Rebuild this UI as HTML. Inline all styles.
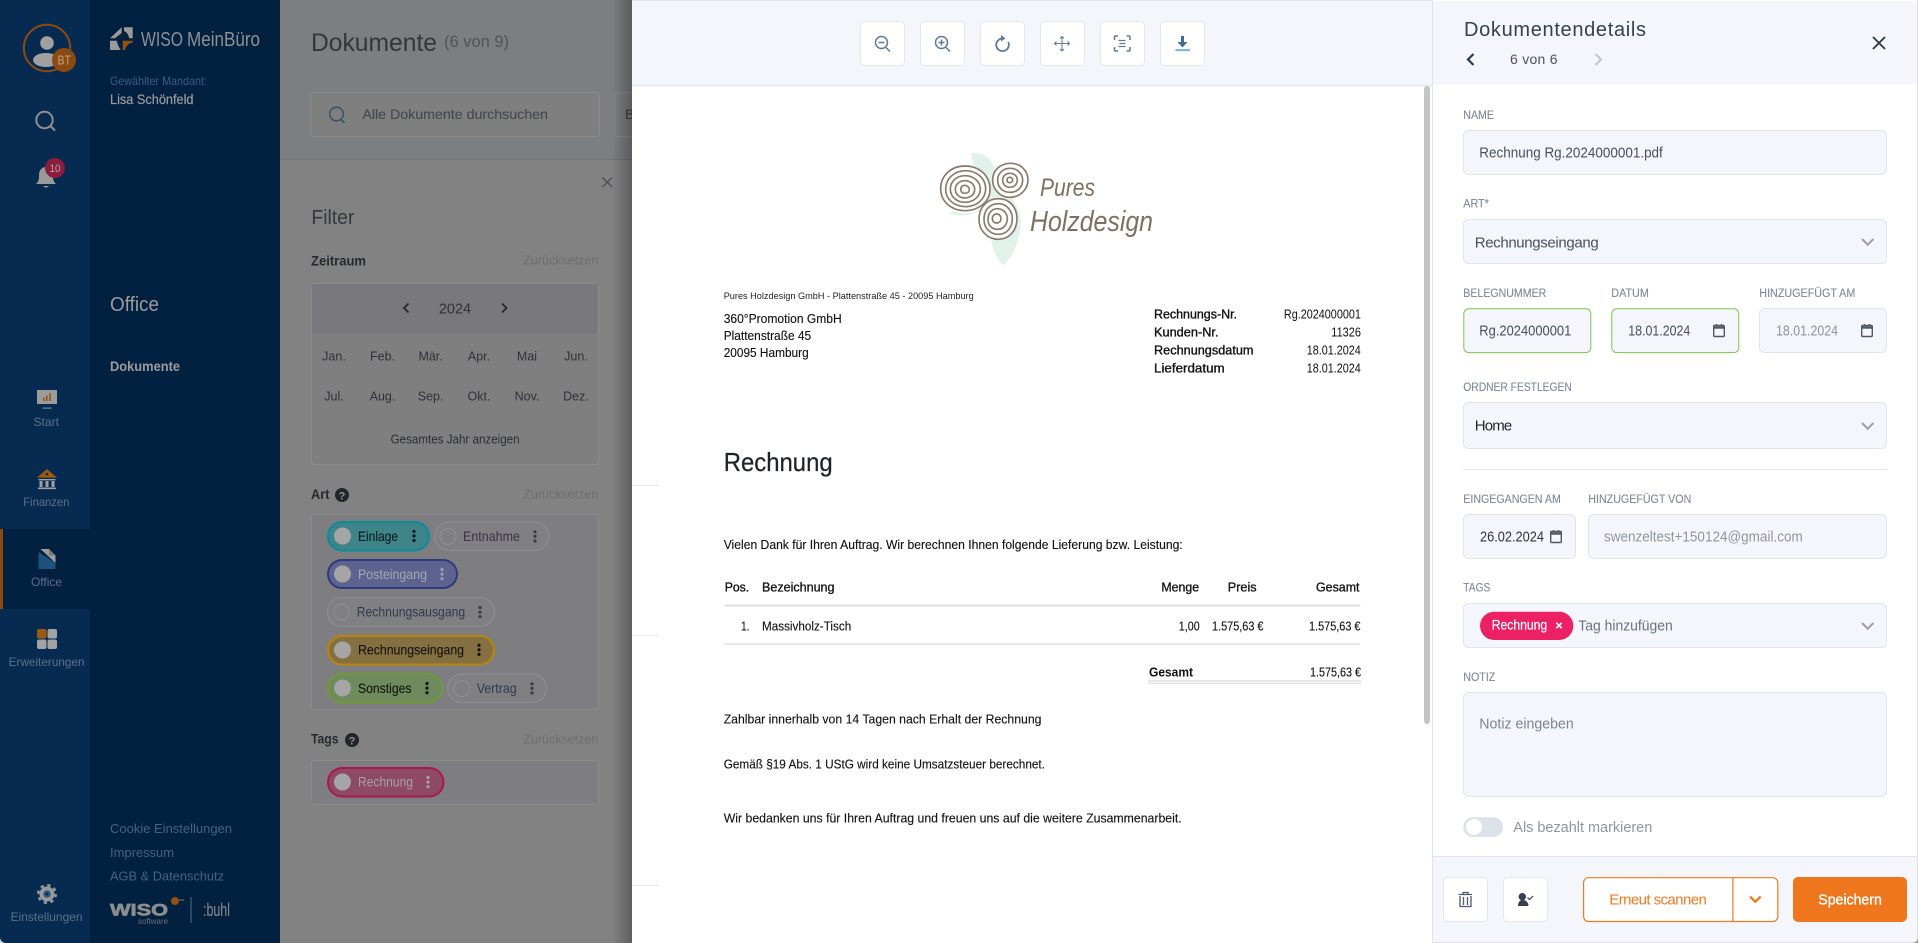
<!DOCTYPE html>
<html lang="de"><head><meta charset="utf-8"><title>Dokumente</title>
<style>
html,body{margin:0;padding:0;width:1918px;height:943px;overflow:hidden;background:#fff}
svg{display:block}
text{font-family:"Liberation Sans",sans-serif;white-space:pre}
.dots{stroke-width:3.2;stroke-linecap:round;stroke-dasharray:0 4.6;fill:none}
.b{font-weight:bold}
.lab{font-size:11.5px;fill:#7f8898;stroke:#7f8898;stroke-width:.12}
.inp{fill:#f4f6fb;stroke:#e0e4ee;stroke-width:1}
.doc{font-size:12.5px;fill:#111;stroke:#111;stroke-width:.12}
.chev{fill:none;stroke:#9aa0ab;stroke-width:2}
.hw{font-family:"Liberation Sans",sans-serif;font-style:italic}
</style></head><body>
<svg xmlns="http://www.w3.org/2000/svg" width="1918" height="943" viewBox="0 0 1918 943">
<defs><linearGradient id="sh" x1="0" x2="1" y1="0" y2="0"><stop offset="0" stop-color="#000" stop-opacity="0"/><stop offset="1" stop-color="#000" stop-opacity=".28"/></linearGradient></defs>

<!-- rail -->
<rect width="90" height="943" fill="#062a50"/>
<rect x="90" width="190" height="943" fill="#022040"/>
<rect y="529" width="90" height="80" fill="#02203f"/>
<rect y="529" width="3" height="80" fill="#8a4a14"/>
<circle cx="47" cy="48" r="23.2" fill="none" stroke="#8a4a14" stroke-width="2"/>
<circle cx="47" cy="43" r="6.8" fill="#a0a0a0"/>
<ellipse cx="46" cy="60" rx="13" ry="7" fill="#a0a0a0"/>
<circle cx="64" cy="60" r="12" fill="#8a4a10"/>
<text x="57.5" y="64.5" font-size="12.5" fill="#c3a488" textLength="13.5" lengthAdjust="spacingAndGlyphs">BT</text>
<circle cx="44.5" cy="120" r="8.2" fill="none" stroke="#8e8f92" stroke-width="2"/>
<path d="M50.5 126l4.5 4.5" stroke="#8e8f92" stroke-width="2"/>
<path d="M36 184c3-3 3-5 3-9 0-5 3-8 7-8s7 3 7 8c0 4 0 6 3 9z" fill="#9a9a9a"/><path d="M43 186h6l-3 2z" fill="#9a9a9a"/>
<circle cx="55" cy="168" r="10" fill="#8a1c3c"/>
<text x="49.5" y="172" font-size="11" fill="#b9a3aa" textLength="11" lengthAdjust="spacingAndGlyphs">10</text>

<rect x="37" y="390" width="20" height="14" fill="#9c9c9c"/><path d="M43 397.5h1.5v3.5H43zM46 395.5h1.5v5.5H46zM49.3 393h1.5v8h-1.5z" fill="#8f4f14"/><rect x="42.5" y="407.5" width="9" height="1.2" fill="#7e8a98"/>
<text x="33.5" y="426" font-size="12" fill="#5c7189" textLength="25.5" lengthAdjust="spacingAndGlyphs">Start</text>
<path d="M47 469l10 8.6H37z" fill="#9b5a10"/><circle cx="47" cy="474" r="1.3" fill="#062a50"/><path d="M38.500 479h17v1.400h-17zM39.500 481h3v6h-3zM45.500 481h3v6h-3zM51.500 481h3v6h-3zM38 487.500h18v1.600H38z" fill="#a0a0a0"/>
<text x="23.300" y="506" font-size="12" fill="#5c7189" textLength="46" lengthAdjust="spacingAndGlyphs">Finanzen</text>
<path d="M40.500 549h8.500l6.500 6.500v7.500z" fill="#9d9d9d"/><path d="M38.500 552l17 11v6h-17z" fill="#1c527c"/><path d="M49 549v6.500h6.500z" fill="#7a7a7a"/>
<text x="31" y="586" font-size="12" fill="#5c7189" textLength="31" lengthAdjust="spacingAndGlyphs">Office</text>
<rect x="37" y="629" width="9.500" height="9.500" rx="2" fill="#9b5a10"/><rect x="47.500" y="629" width="9.500" height="9.500" rx="2" fill="#a3a3a3"/><rect x="37" y="639.500" width="9.500" height="9.500" rx="2" fill="#a3a3a3"/><rect x="47.500" y="639.500" width="9.500" height="9.500" rx="2" fill="#a3a3a3"/>
<text x="8.600" y="666" font-size="12" fill="#5c7189" textLength="76" lengthAdjust="spacingAndGlyphs">Erweiterungen</text>
<circle cx="47" cy="894" r="7.500" fill="#9a9a9a"/><circle cx="47" cy="894" r="8.800" fill="none" stroke="#9a9a9a" stroke-width="2.400" stroke-dasharray="3.300 3.610"/><circle cx="47" cy="894" r="3.800" fill="#2a5a88"/><circle cx="47" cy="894" r="1.500" fill="#062a50"/>
<text x="10.600" y="921" font-size="12" fill="#5c7189" textLength="72" lengthAdjust="spacingAndGlyphs">Einstellungen</text>

<!-- nav -->
<path d="M110 38.300L121.700 27.300V33L115 38.300zM124 27.300h8.700v11H129Q128.500 33 124 31zM110 40.700h6.700Q118 46 120.700 50H110z" fill="#9a9a9a"/><path d="M122.700 40.700h10v2Q127 43 125 50h-2.300z" fill="#94500f"/>
<text x="141" y="46" font-size="20" fill="#8f9092" textLength="42" lengthAdjust="spacingAndGlyphs">WISO</text>
<text x="187" y="46" font-size="20" fill="#8f9092" textLength="73" lengthAdjust="spacingAndGlyphs">MeinBüro</text>
<text x="110" y="85" font-size="12" fill="#3a5f82" textLength="97" lengthAdjust="spacingAndGlyphs">Gewählter Mandant:</text>
<text x="110" y="104" font-size="14" fill="#9b9b9b" stroke="#9b9b9b" stroke-width=".2" textLength="83.500" lengthAdjust="spacingAndGlyphs">Lisa Schönfeld</text>
<text x="110" y="311" font-size="20" fill="#9c9c9c" textLength="49" lengthAdjust="spacingAndGlyphs">Office</text>
<text x="110" y="371" font-size="13.500" class="b" fill="#9c9c9c" textLength="70" lengthAdjust="spacingAndGlyphs">Dokumente</text>
<text x="110" y="833" font-size="13" fill="#46627f" textLength="122" lengthAdjust="spacingAndGlyphs">Cookie Einstellungen</text>
<text x="110" y="857" font-size="13" fill="#46627f" textLength="64" lengthAdjust="spacingAndGlyphs">Impressum</text>
<text x="110" y="880.500" font-size="13" fill="#46627f" textLength="114" lengthAdjust="spacingAndGlyphs">AGB &amp; Datenschutz</text>
<text x="110" y="915.500" font-size="17" class="b" fill="#8c8d8f" stroke="#8c8d8f" stroke-width=".7" textLength="58" lengthAdjust="spacingAndGlyphs">WISO</text>
<text x="138" y="924" font-size="8" fill="#6e7478" textLength="30" lengthAdjust="spacingAndGlyphs">software</text>
<circle cx="175" cy="901" r="4" fill="#94500f"/><path d="M179 900h5" stroke="#6a5a4a" stroke-width="1.500"/>
<rect x="190.500" y="897" width="1" height="26" fill="#5a6a78"/>
<text x="203" y="916" font-size="18" fill="#8c8d8f" textLength="27" lengthAdjust="spacingAndGlyphs">:buhl</text>

<!-- main dimmed -->
<rect x="280" width="352" height="943" fill="#828283"/>
<rect x="280" width="352" height="159" fill="#7d7e80"/>
<rect x="280" y="159" width="352" height="1" fill="#737478"/>
<text x="311" y="51" font-size="25" fill="#33363b" textLength="126" lengthAdjust="spacingAndGlyphs">Dokumente</text>
<text x="444" y="47" font-size="17" fill="#50535a" textLength="65" lengthAdjust="spacingAndGlyphs">(6 von 9)</text>
<rect x="310.500" y="92.500" width="289" height="44" rx="3" fill="#7f7f80" stroke="#8a8b90"/>
<rect x="614.500" y="92.500" width="30" height="44" rx="3" fill="#7f7f80" stroke="#8a8b90"/>
<circle cx="336.500" cy="114" r="6.800" fill="none" stroke="#3e5266" stroke-width="1.600"/><path d="M341 119.500l3.500 3.500" stroke="#3e5266" stroke-width="1.600"/>
<text x="362.400" y="119" font-size="14" fill="#44484e" stroke="#44484e" stroke-width=".12" textLength="185.500" lengthAdjust="spacingAndGlyphs">Alle Dokumente durchsuchen</text>
<text x="625" y="119" font-size="14" fill="#3a3d42">B</text>
<path d="M602.500 177.500l9.500 9.500m0-9.500l-9.500 9.500" stroke="#4b4e55" stroke-width="1.300" fill="none"/>
<text x="311.400" y="224" font-size="20" fill="#34373c" textLength="43" lengthAdjust="spacingAndGlyphs">Filter</text>
<text x="311" y="265.500" font-size="13.500" class="b" fill="#26292e" textLength="55" lengthAdjust="spacingAndGlyphs">Zeitraum</text>
<text x="523.300" y="264.500" font-size="13" fill="#6d6e70" textLength="75" lengthAdjust="spacingAndGlyphs">Zurücksetzen</text>

<rect x="311.500" y="283.500" width="287" height="181" rx="3" fill="#7f7f80" stroke="#8b8c92"/>
<path d="M312 284h286v50H312z" fill="#79797d"/>
<path d="M408.500 303.500l-4.500 4.500 4.500 4.500M502 303.500l4.500 4.500-4.500 4.500" fill="none" stroke="#25282d" stroke-width="1.800"/>
<text x="455" y="313.500" font-size="14.500" text-anchor="middle" fill="#2f3237">2024</text>
<g font-size="12.500" fill="#2f3237" text-anchor="middle">
<text x="334" y="360.500">Jan.</text><text x="382.500" y="360.500">Feb.</text><text x="430.600" y="360.500">Mär.</text><text x="479" y="360.500">Apr.</text><text x="527" y="360.500">Mai</text><text x="576" y="360.500">Jun.</text>
<text x="334" y="400.500">Jul.</text><text x="382.500" y="400.500">Aug.</text><text x="430.600" y="400.500">Sep.</text><text x="479" y="400.500">Okt.</text><text x="527" y="400.500">Nov.</text><text x="576" y="400.500">Dez.</text>
</g>
<text x="390.600" y="443.500" font-size="13" fill="#2b2e33" textLength="129" lengthAdjust="spacingAndGlyphs">Gesamtes Jahr anzeigen</text>

<text x="311" y="499" font-size="14" class="b" fill="#26292e" textLength="18.500" lengthAdjust="spacingAndGlyphs">Art</text>
<circle cx="342" cy="495" r="7" fill="#22252b"/><text x="342" y="499.500" font-size="11" class="b" text-anchor="middle" fill="#909195">?</text>
<text x="523.300" y="498.500" font-size="13" fill="#6d6e70" textLength="75" lengthAdjust="spacingAndGlyphs">Zurücksetzen</text>
<rect x="311.500" y="514.500" width="287" height="195" rx="3" fill="#7e7e80" stroke="#8b8c92"/>

<!-- chips -->
<rect x="328" y="522" width="101" height="28.500" rx="14.200" fill="#3f8488" stroke="#0c8b98" stroke-width="2"/>
<circle cx="342.500" cy="536" r="8.500" fill="#a5a5a5"/>
<text x="358" y="541" font-size="14" fill="#0b1e22" stroke="#0b1e22" stroke-width=".12" textLength="40" lengthAdjust="spacingAndGlyphs">Einlage</text>
<path d="M414 531.300v9.400" class="dots" stroke="#0a1a20"/>
<rect x="434.800" y="522" width="114" height="28.500" rx="14.200" fill="#808083" stroke="#8f9096" stroke-width="1"/>
<circle cx="448" cy="536.500" r="8" fill="none" stroke="#8f9096"/>
<text x="463" y="541" font-size="14" fill="#3c3248" textLength="57" lengthAdjust="spacingAndGlyphs">Entnahme</text>
<path d="M535 531.800v9.400" class="dots" stroke="#3a3d45"/>

<rect x="328" y="560" width="129" height="28" rx="14" fill="#5c638f" stroke="#2e3a80" stroke-width="2"/>
<circle cx="342.500" cy="574" r="8.500" fill="#a5a5a5"/>
<text x="358" y="579" font-size="14" fill="#a5a6b3" textLength="69" lengthAdjust="spacingAndGlyphs">Posteingang</text>
<path d="M442 569.500v9.400" class="dots" stroke="#9b9cae"/>

<rect x="327.500" y="597.500" width="167" height="29" rx="14.500" fill="#808083" stroke="#8f9096" stroke-width="1"/>
<circle cx="341.500" cy="612" r="8" fill="none" stroke="#8f9096"/>
<text x="356.700" y="616.500" font-size="14" fill="#2d3a4e" textLength="108.500" lengthAdjust="spacingAndGlyphs">Rechnungsausgang</text>
<path d="M480 607.500v9.400" class="dots" stroke="#3a3d45"/>

<rect x="328" y="636" width="166" height="28.500" rx="14.200" fill="#857042" stroke="#b8860b" stroke-width="2"/>
<circle cx="342.500" cy="650" r="8.500" fill="#a5a5a5"/>
<text x="358" y="654.500" font-size="14" fill="#15130c" stroke="#15130c" stroke-width=".12" textLength="106" lengthAdjust="spacingAndGlyphs">Rechnungseingang</text>
<path d="M479 645.200v9.400" class="dots" stroke="#15130c"/>

<rect x="328" y="674" width="114" height="28.500" rx="14.200" fill="#6f8a5c" stroke="#6e9a38" stroke-width="2"/>
<circle cx="342.500" cy="688" r="8.500" fill="#a5a5a5"/>
<text x="358" y="693" font-size="14" fill="#13180e" stroke="#13180e" stroke-width=".12" textLength="53.500" lengthAdjust="spacingAndGlyphs">Sonstiges</text>
<path d="M427 683.500v9.400" class="dots" stroke="#13180e"/>
<rect x="447.500" y="674" width="99" height="28.500" rx="14.200" fill="#808083" stroke="#8f9096" stroke-width="1"/>
<circle cx="461.700" cy="688.500" r="8" fill="none" stroke="#8f9096"/>
<text x="476.700" y="693" font-size="14" fill="#2d3a4e" textLength="40" lengthAdjust="spacingAndGlyphs">Vertrag</text>
<path d="M532 683.800v9.400" class="dots" stroke="#3a3d45"/>

<text x="311" y="743.500" font-size="14" class="b" fill="#26292e" textLength="27.500" lengthAdjust="spacingAndGlyphs">Tags</text>
<circle cx="352" cy="740" r="7" fill="#22252b"/><text x="352" y="744.500" font-size="11" class="b" text-anchor="middle" fill="#909195">?</text>
<text x="523.300" y="743.500" font-size="13" fill="#6d6e70" textLength="75" lengthAdjust="spacingAndGlyphs">Zurücksetzen</text>
<rect x="311.500" y="760.500" width="287" height="44" rx="3" fill="#7e7e80" stroke="#8b8c92"/>
<rect x="328" y="768" width="115.500" height="28.500" rx="14.200" fill="#8e4a62" stroke="#a81a4c" stroke-width="2"/>
<circle cx="342.500" cy="782" r="8.500" fill="#a5a5a5"/>
<text x="358" y="786.500" font-size="14" fill="#a9a0a4" textLength="55" lengthAdjust="spacingAndGlyphs">Rechnung</text>
<path d="M428 777.500v9.400" class="dots" stroke="#a9a0a4"/>

<rect x="612" width="20" height="943" fill="url(#sh)"/>

<!-- doc area -->
<rect x="632" width="801" height="943" fill="#fff"/>
<rect x="632" width="801" height="85.500" fill="#f4f6fb"/>
<rect x="632" y="0" width="1286" height="1" fill="#dfe3ee"/>
<rect x="632" y="85" width="1286" height="1.200" fill="#e0e3ed"/>
<g fill="#fff" stroke="#e3e6ef">
<rect x="860.500" y="21.500" width="44" height="44" rx="4"/><rect x="920.500" y="21.500" width="44" height="44" rx="4"/><rect x="980.500" y="21.500" width="44" height="44" rx="4"/><rect x="1040.500" y="21.500" width="44" height="44" rx="4"/><rect x="1100.500" y="21.500" width="44" height="44" rx="4"/><rect x="1160.500" y="21.500" width="44" height="44" rx="4"/>
</g>
<g fill="none" stroke="#5f7a99" stroke-width="1.500">
<circle cx="881.500" cy="42.500" r="6"/><path d="M886 47.500l4 4"/><path d="M878.500 42.500h6"/>
<circle cx="941.500" cy="42.500" r="6"/><path d="M946 47.500l4 4"/><path d="M938.500 42.500h6M941.500 39.500v6"/>
<path d="M1002.500 38.500a6.300 6.300 0 1 0 5.700 3.500" stroke-width="1.800"/><path d="M1001 35v6.500l4.500-3.300z" fill="#5f7a99" stroke="none"/>
<g stroke-width="1"><path d="M1062 36.500v14.500M1054.500 43.500h15"/><path d="M1060 38.500l2-2 2 2M1060 49l2 2 2-2M1056.500 41.500l-2 2 2 2M1067.500 41.500l2 2-2 2"/></g>
<path d="M1114.500 40v-3a1 1 0 0 1 1-1h2.500M1126.500 36h2.500a1 1 0 0 1 1 1v3M1114.500 47v3a1 1 0 0 0 1 1h2.500M1126.500 51h2.500a1 1 0 0 0 1-1v-3"/><path d="M1118.500 40.500h7M1119.500 43.500h5.500M1118.500 46.500h7" stroke-width="1.300"/>
</g>
<path d="M1181 36h3v6h3.500l-5 5.500-5-5.500h3.500z" fill="#3b6d9c"/><rect x="1175.500" y="49" width="14.500" height="2.200" fill="#7eb6e8"/>

<rect x="632" y="485" width="27" height="1" fill="#e8e8e8"/><rect x="632" y="635" width="27" height="1" fill="#e8e8e8"/><rect x="632" y="885" width="27" height="1" fill="#e8e8e8"/>
<rect x="1424" y="86" width="6" height="638" rx="3" fill="#c4c4c4"/>

<!-- logo -->
<g transform="translate(900 140) scale(.3333)">
<path d="M213 38C240 37 262 46 274 66 284 84 288 100 305 128 330 165 352 190 360 230 370 275 345 340 312 375 290 362 278 330 272 290 262 260 245 232 235 215 205 228 170 232 148 218 170 205 200 205 232 195 240 150 220 95 213 38Z" fill="#e0f2e9"/>
<circle cx="196" cy="146" r="74" fill="#fff"/><circle cx="330" cy="120" r="54" fill="#fff"/><circle cx="295" cy="237" r="60" fill="#fff"/>
<g fill="none" stroke="#8a7a6e" stroke-width="5">
<path d="M195 78c44 0 75 30 75 70 0 38-35 64-75 64-42 0-73-28-73-66 0-40 32-68 73-68z"/>
<path d="M197 92c34 0 60 24 60 54 0 32-28 54-60 54-34 0-60-22-60-52 0-32 26-56 60-56z"/>
<path d="M195 107c26 0 46 18 46 40 0 24-22 40-46 40-26 0-44-18-44-40 0-22 18-40 44-40z"/>
<path d="M194 122c18 0 30 12 30 26 0 16-14 26-30 26-16 0-28-12-28-26 0-14 12-26 28-26z"/>
<path d="M194 136c8 0 14 6 14 12 0 8-6 12-14 12-8 0-12-6-12-12 0-7 5-12 12-12z"/>
<path d="M332 70c30 0 52 22 52 50 0 28-24 52-54 52-30 0-52-24-52-52 0-30 24-50 54-50z"/>
<path d="M330 85c22 0 38 16 38 35 0 22-16 37-38 37-22 0-37-15-37-37 0-19 15-35 37-35z"/>
<path d="M330 100c13 0 22 9 22 20 0 13-9 22-22 22-13 0-22-9-22-22 0-11 9-20 22-20z"/>
<path d="M329 112c5 0 9 3 9 8 0 5-4 8-9 8-5 0-8-3-8-8 0-4 3-8 8-8z"/>
<path d="M295 176c34 0 56 26 56 60 0 36-24 62-56 62-32 0-58-26-58-60 0-36 24-62 58-62z"/>
<path d="M295 191c24 0 42 20 42 45 0 27-17 47-42 47-26 0-43-20-43-45 0-27 17-47 43-47z"/>
<path d="M292 206c17 0 30 13 30 30 0 19-13 32-30 32-17 0-28-13-28-30 0-19 13-32 28-32z"/>
<path d="M290 222c8 0 13 6 13 14 0 8-5 13-13 13-8 0-13-5-13-13 0-8 5-14 13-14z"/>
</g>
</g>
<text x="1040" y="196" font-size="25" class="hw" fill="#806e62" textLength="55" lengthAdjust="spacingAndGlyphs">Pures</text>
<text x="1030" y="231" font-size="29" class="hw" fill="#806e62" textLength="123" lengthAdjust="spacingAndGlyphs">Holzdesign</text>

<!-- doc text -->
<text x="723.700" y="299" font-size="9.500" fill="#222" textLength="250" lengthAdjust="spacingAndGlyphs">Pures Holzdesign GmbH - Plattenstraße 45 - 20095 Hamburg</text>
<text x="723.700" y="323" class="doc" textLength="118" lengthAdjust="spacingAndGlyphs">360°Promotion GmbH</text>
<text x="723.700" y="340" class="doc" textLength="87.500" lengthAdjust="spacingAndGlyphs">Plattenstraße 45</text>
<text x="723.700" y="357" class="doc" textLength="85" lengthAdjust="spacingAndGlyphs">20095 Hamburg</text>
<g font-size="12.500" fill="#111">
<text x="1154" y="318.500" textLength="83" lengthAdjust="spacingAndGlyphs" stroke="#111" stroke-width=".35">Rechnungs-Nr.</text>
<text x="1154" y="336.500" textLength="64.500" lengthAdjust="spacingAndGlyphs" stroke="#111" stroke-width=".35">Kunden-Nr.</text>
<text x="1154" y="354.500" textLength="99.500" lengthAdjust="spacingAndGlyphs" stroke="#111" stroke-width=".35">Rechnungsdatum</text>
<text x="1154" y="372.500" textLength="70.700" lengthAdjust="spacingAndGlyphs" stroke="#111" stroke-width=".35">Lieferdatum</text>
<text x="1283.900" y="318.500" textLength="77" lengthAdjust="spacingAndGlyphs">Rg.2024000001</text>
<text x="1331.300" y="336.500" textLength="29.700" lengthAdjust="spacingAndGlyphs">11326</text>
<text x="1306.800" y="354.500" textLength="54" lengthAdjust="spacingAndGlyphs">18.01.2024</text>
<text x="1306.800" y="372.500" textLength="54" lengthAdjust="spacingAndGlyphs">18.01.2024</text>
</g>
<text x="723.700" y="471" font-size="26" fill="#1f2328" stroke="#1f2328" stroke-width=".25" textLength="109" lengthAdjust="spacingAndGlyphs">Rechnung</text>
<text x="723.700" y="549" class="doc" textLength="459" lengthAdjust="spacingAndGlyphs">Vielen Dank für Ihren Auftrag. Wir berechnen Ihnen folgende Lieferung bzw. Leistung:</text>
<g font-size="12.500" fill="#111" stroke="#111" stroke-width=".3">
<text x="724.700" y="591.500" textLength="24.500" lengthAdjust="spacingAndGlyphs">Pos.</text>
<text x="762" y="591.500" textLength="72.500" lengthAdjust="spacingAndGlyphs">Bezeichnung</text>
<text x="1161.400" y="591.500" textLength="37.800" lengthAdjust="spacingAndGlyphs">Menge</text>
<text x="1227.800" y="591.500" textLength="28.800" lengthAdjust="spacingAndGlyphs">Preis</text>
<text x="1316" y="591.500" textLength="43.500" lengthAdjust="spacingAndGlyphs">Gesamt</text>
</g>
<rect x="724.700" y="604.500" width="635.500" height="2.300" fill="#e2e2e2"/>
<text x="741" y="630.500" class="doc" textLength="8.500" lengthAdjust="spacingAndGlyphs">1.</text>
<text x="762" y="630.500" class="doc" textLength="89.200" lengthAdjust="spacingAndGlyphs">Massivholz-Tisch</text>
<text x="1178.800" y="630.500" class="doc" textLength="20.900" lengthAdjust="spacingAndGlyphs">1,00</text>
<text x="1212" y="630.500" class="doc" textLength="51.500" lengthAdjust="spacingAndGlyphs">1.575,63 €</text>
<text x="1309" y="630.500" class="doc" textLength="51.500" lengthAdjust="spacingAndGlyphs">1.575,63 €</text>
<rect x="724.700" y="643.500" width="635.500" height="1.300" fill="#dcdcdc"/>
<text x="1149" y="676.500" font-size="12.500" class="b" fill="#111" textLength="44" lengthAdjust="spacingAndGlyphs">Gesamt</text>
<text x="1310" y="676.500" class="doc" textLength="51" lengthAdjust="spacingAndGlyphs">1.575,63 €</text>
<rect x="1148" y="680.500" width="213" height="1" fill="#cfcfcf"/><rect x="1148" y="682.800" width="213" height="1.200" fill="#dedede"/>
<text x="723.700" y="723.500" class="doc" textLength="317.800" lengthAdjust="spacingAndGlyphs">Zahlbar innerhalb von 14 Tagen nach Erhalt der Rechnung</text>
<text x="723.700" y="768.500" class="doc" textLength="321.300" lengthAdjust="spacingAndGlyphs">Gemäß §19 Abs. 1 UStG wird keine Umsatzsteuer berechnet.</text>
<text x="723.700" y="822.500" class="doc" textLength="458" lengthAdjust="spacingAndGlyphs">Wir bedanken uns für Ihren Auftrag und freuen uns auf die weitere Zusammenarbeit.</text>

<!-- details panel -->
<rect x="1432.500" y="0" width="485.500" height="943" fill="#fff"/>
<rect x="1432.500" y="1" width="485.500" height="84" fill="#f4f6fb"/>
<rect x="1432.500" y="856" width="485.500" height="87" fill="#f4f6fb"/>
<rect x="1432.500" y="856" width="485.500" height="1" fill="#dfe3ee"/>
<rect x="1432" y="0" width="1" height="943" fill="#dfe3ee"/>
<rect x="1917" y="0" width="1" height="943" fill="#dfe3ee"/>
<rect x="1432" y="942" width="486" height="1" fill="#dfe3ee"/>
<text x="1464" y="36" font-size="20" fill="#36404f" textLength="182" lengthAdjust="spacing">Dokumentendetails</text>
<path d="M1473.500 54l-5.500 5.500 5.500 5.500" fill="none" stroke="#2f3a48" stroke-width="2.200"/>
<text x="1510" y="64" font-size="14" fill="#4a5260" textLength="47.500" lengthAdjust="spacing">6 von 6</text>
<path d="M1595.500 54l5.500 5.500-5.500 5.500" fill="none" stroke="#c5c7cc" stroke-width="2.200"/>
<path d="M1873 37l12 12m0-12l-12 12" stroke="#2f3a48" stroke-width="1.900" fill="none"/>

<text x="1463.300" y="119" class="lab" textLength="30.700" lengthAdjust="spacingAndGlyphs">NAME</text>
<rect x="1463.500" y="130.500" width="423" height="44" rx="5" class="inp"/>
<text x="1479.300" y="157.500" font-size="15" fill="#47505e" textLength="183.500" lengthAdjust="spacingAndGlyphs">Rechnung Rg.2024000001.pdf</text>

<text x="1463.300" y="207.500" class="lab" textLength="25.500" lengthAdjust="spacingAndGlyphs">ART*</text>
<rect x="1463.500" y="219.500" width="423" height="44" rx="5" class="inp"/>
<text x="1474.700" y="247.500" font-size="15" fill="#47505e" textLength="124" lengthAdjust="spacing">Rechnungseingang</text>
<path d="M1862 239l5.700 5.700 5.700-5.700" class="chev"/>

<text x="1463.300" y="297" class="lab" textLength="83" lengthAdjust="spacingAndGlyphs">BELEGNUMMER</text>
<text x="1611.300" y="297" class="lab" textLength="37.500" lengthAdjust="spacingAndGlyphs">DATUM</text>
<text x="1759.300" y="297" class="lab" textLength="96" lengthAdjust="spacingAndGlyphs">HINZUGEFÜGT AM</text>
<rect x="1463.800" y="308.800" width="127" height="43.800" rx="5" fill="#f4f6fb" stroke="#7dc64f" stroke-width="1"/>
<rect x="1611.800" y="308.800" width="127" height="43.800" rx="5" fill="#f4f6fb" stroke="#7dc64f" stroke-width="1"/>
<rect x="1759.500" y="308.500" width="127" height="44" rx="5" class="inp"/>
<text x="1479.300" y="335.500" font-size="15" fill="#47505e" textLength="92" lengthAdjust="spacingAndGlyphs">Rg.2024000001</text>
<text x="1628.300" y="335.500" font-size="15" fill="#47505e" textLength="62" lengthAdjust="spacingAndGlyphs">18.01.2024</text>
<text x="1776" y="335.500" font-size="15" fill="#8e95a2" textLength="62" lengthAdjust="spacingAndGlyphs">18.01.2024</text>
<g fill="none" stroke="#4e5866" stroke-width="1.400">
<rect x="1713.700" y="325.500" width="10.600" height="11" rx="1"/><path d="M1713 327.500h12" stroke-width="2.400"/><path d="M1716.500 324v2M1721.500 324v2"/>
<rect x="1861.700" y="325.500" width="10.600" height="11" rx="1"/><path d="M1861 327.500h12" stroke-width="2.400"/><path d="M1864.500 324v2M1869.500 324v2"/>
<rect x="1550.700" y="531.500" width="10.600" height="11" rx="1"/><path d="M1550 533.500h12" stroke-width="2.400"/><path d="M1553.500 530v2M1558.500 530v2"/>
</g>

<text x="1463.300" y="391" class="lab" textLength="108.500" lengthAdjust="spacingAndGlyphs">ORDNER FESTLEGEN</text>
<rect x="1463.500" y="402.500" width="423" height="46" rx="5" class="inp"/>
<text x="1474.700" y="430.500" font-size="15" fill="#23272e" textLength="37.500" lengthAdjust="spacing">Home</text>
<path d="M1862 423l5.700 5.700 5.700-5.700" class="chev"/>
<rect x="1463.300" y="469" width="423.500" height="1" fill="#e0e4ee"/>

<text x="1463.300" y="503" class="lab" textLength="97.500" lengthAdjust="spacingAndGlyphs">EINGEGANGEN AM</text>
<text x="1588.300" y="503" class="lab" textLength="103" lengthAdjust="spacingAndGlyphs">HINZUGEFÜGT VON</text>
<rect x="1463.500" y="514.500" width="112" height="44" rx="5" class="inp"/>
<rect x="1588.500" y="514.500" width="298" height="44" rx="5" class="inp"/>
<g fill="none" stroke="#4e5866" stroke-width="1.400"><rect x="1550.700" y="531.500" width="10.600" height="11" rx="1"/><path d="M1550 533.500h12" stroke-width="2.400"/><path d="M1553.500 530v2M1558.500 530v2"/></g>
<text x="1480" y="541.500" font-size="15" fill="#2d3440" textLength="64" lengthAdjust="spacingAndGlyphs">26.02.2024</text>
<text x="1604" y="541.500" font-size="15" fill="#8e95a2" textLength="198.700" lengthAdjust="spacingAndGlyphs">swenzeltest+150124@gmail.com</text>

<text x="1463.300" y="591.500" class="lab" textLength="27" lengthAdjust="spacingAndGlyphs">TAGS</text>
<rect x="1463.500" y="603.500" width="423" height="44" rx="5" class="inp"/>
<rect x="1480" y="611.700" width="93.300" height="28.300" rx="14.100" fill="#ec2064"/>
<text x="1491.700" y="629.500" font-size="14" fill="#fff" textLength="55.500" lengthAdjust="spacingAndGlyphs" stroke="#fff" stroke-width=".2">Rechnung</text>
<path d="M1556.300 622.800l5.400 5.400m0-5.400l-5.400 5.400" stroke="#fff" stroke-width="1.600" fill="none"/>
<text x="1578.300" y="630.500" font-size="15" fill="#6a7280" textLength="94.500" lengthAdjust="spacingAndGlyphs">Tag hinzufügen</text>
<path d="M1862 623l5.700 5.700 5.700-5.700" class="chev"/>

<text x="1463.300" y="681" class="lab" textLength="32" lengthAdjust="spacingAndGlyphs">NOTIZ</text>
<rect x="1463.500" y="692.500" width="423" height="104" rx="5" class="inp"/>
<text x="1479.300" y="728.500" font-size="15" fill="#7c8492" textLength="94.500" lengthAdjust="spacingAndGlyphs">Notiz eingeben</text>

<rect x="1463.300" y="817.300" width="39.700" height="19.700" rx="9.800" fill="#dde1ea"/>
<circle cx="1474" cy="827" r="8" fill="#fff"/>
<text x="1513.300" y="832" font-size="14.500" fill="#8e95a2" textLength="139" lengthAdjust="spacing">Als bezahlt markieren</text>

<rect x="1443.500" y="877.500" width="44" height="44" rx="4" fill="#fff" stroke="#e3e6ef"/>
<rect x="1503.500" y="877.500" width="44" height="44" rx="4" fill="#fff" stroke="#e3e6ef"/>
<g fill="none" stroke="#4f5a68" stroke-width="1.300"><path d="M1458.700 894.500h13.300M1463 894.500v-2h5v2"/><path d="M1460 896v10.500h11V896M1463.500 897v8M1467.500 897v8"/></g>
<circle cx="1522.300" cy="896.700" r="3.700" fill="#36404f"/><path d="M1518 906c0-4 2-6 4.500-6s5 1.500 6 4.500l-.5 1.500z" fill="#36404f"/><path d="M1527.500 897.500l2 2 3.500-3.500" fill="none" stroke="#36404f" stroke-width="1.200"/>

<path d="M1583.600 883a5 5 0 0 1 5-5.300H1772.800a5 5 0 0 1 5 5.300v33.500a5 5 0 0 1-5 5H1588.600a5 5 0 0 1-5-5z" fill="#fff" stroke="#ee7a22" stroke-width="1.200"/>
<rect x="1732.300" y="878" width="1.200" height="44" fill="#ee7a22"/>
<text x="1609.300" y="904.500" font-size="15" fill="#ee7a22" textLength="97.500" lengthAdjust="spacing">Erneut scannen</text>
<path d="M1750 896.500l5.300 5.300 5.300-5.300" fill="none" stroke="#ee7a22" stroke-width="2.300"/>
<rect x="1793" y="877" width="114" height="45" rx="5" fill="#ee771e"/>
<text x="1818.300" y="904.500" font-size="15" fill="#fff" stroke="#fff" stroke-width=".35" textLength="63.500" lengthAdjust="spacingAndGlyphs">Speichern</text>

<!-- corners -->
<path d="M0 937v6h6a6 6 0 0 1-6-6z" fill="#d7d7d7"/>
<path d="M1918 937v6h-6a6 6 0 0 0 6-6z" fill="#9a9a9a"/>
</svg>
</body></html>
